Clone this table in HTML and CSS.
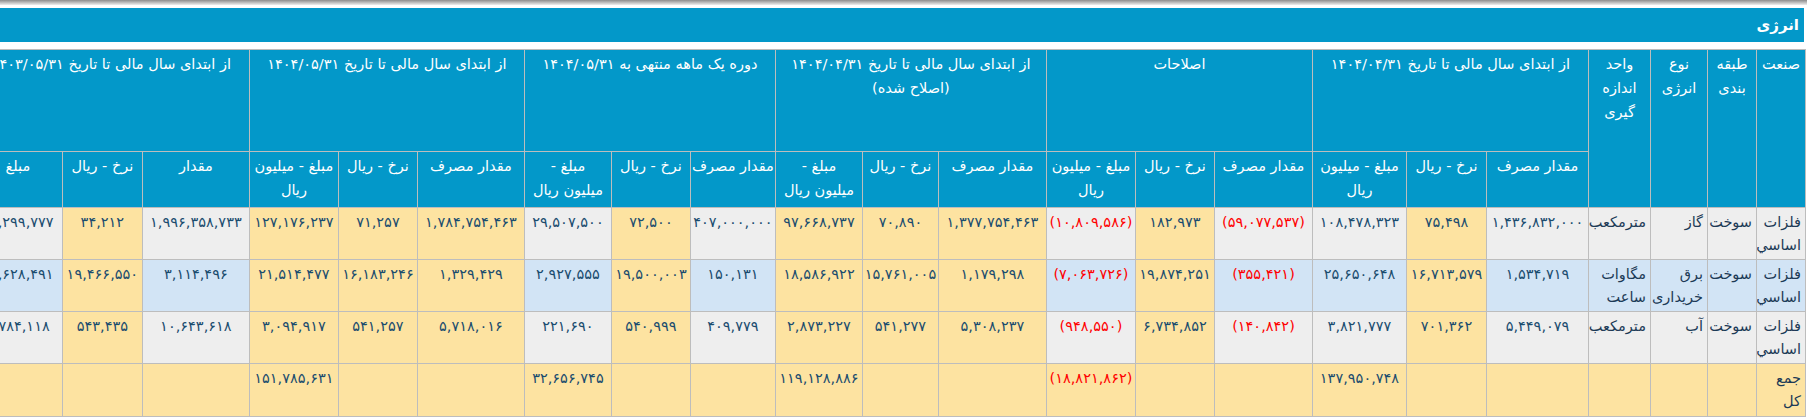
FILE: index.html
```html
<!DOCTYPE html>
<html lang="fa" dir="rtl">
<head>
<meta charset="utf-8">
<title>انرژی</title>
<link rel="stylesheet" href="styles.css">
</head>
<body>
<div class="shade"></div>
<div class="title-bar">انرژی</div>
<div class="table-wrap">
<table class="energy">
<colgroup>
<col class="w49"><col class="w49"><col class="w57"><col class="w62">
<col class="w102"><col class="w80"><col class="w94">
<col class="w98"><col class="w79"><col class="w89">
<col class="w108"><col class="w76"><col class="w87">
<col class="w85"><col class="w79"><col class="w87">
<col class="w107"><col class="w79"><col class="w89">
<col class="w107"><col class="w80"><col class="w89">
</colgroup>
<thead>
<tr class="h1">
<th rowspan="2">صنعت</th>
<th rowspan="2">طبقه بندی</th>
<th rowspan="2">نوع انرژی</th>
<th rowspan="2">واحد اندازه گیری</th>
<th colspan="3">از ابتدای سال مالی تا تاریخ ۱۴۰۴/۰۴/۳۱</th>
<th colspan="3">اصلاحات</th>
<th colspan="3">از ابتدای سال مالی تا تاریخ ۱۴۰۴/۰۴/۳۱ (اصلاح شده)</th>
<th colspan="3">دوره یک ماهه منتهی به ۱۴۰۴/۰۵/۳۱</th>
<th colspan="3">از ابتدای سال مالی تا تاریخ ۱۴۰۴/۰۵/۳۱</th>
<th colspan="3">از ابتدای سال مالی تا تاریخ ۱۴۰۳/۰۵/۳۱</th>
</tr>
<tr class="h2">
<th class="nw">مقدار مصرف</th><th class="nw">نرخ - ریال</th><th>مبلغ - میلیون ریال</th>
<th class="nw">مقدار مصرف</th><th class="nw">نرخ - ریال</th><th>مبلغ - میلیون ریال</th>
<th class="nw">مقدار مصرف</th><th class="nw">نرخ - ریال</th><th>مبلغ -<br>میلیون ریال</th>
<th class="nw">مقدار مصرف</th><th class="nw">نرخ - ریال</th><th>مبلغ -<br>میلیون ریال</th>
<th class="nw">مقدار مصرف</th><th class="nw">نرخ - ریال</th><th>مبلغ - میلیون ریال</th>
<th class="nw">مقدار</th><th class="nw">نرخ - ریال</th><th class="nw">مبلغ</th>
</tr>
</thead>
<tbody>
<tr class="row">
<td class="txt g">فلزات اساسي</td><td class="txt g">سوخت</td><td class="txt g">گاز</td><td class="txt g">مترمکعب</td>
<td class="n g">۱,۴۳۶,۸۳۲,۰۰۰</td><td class="n y">۷۵,۴۹۸</td><td class="n g">۱۰۸,۴۷۸,۳۲۳</td>
<td class="n g neg">(۵۹,۰۷۷,۵۳۷)</td><td class="n y">۱۸۲,۹۷۳</td><td class="n g neg">(۱۰,۸۰۹,۵۸۶)</td>
<td class="n y">۱,۳۷۷,۷۵۴,۴۶۳</td><td class="n y">۷۰,۸۹۰</td><td class="n y">۹۷,۶۶۸,۷۳۷</td>
<td class="n g">۴۰۷,۰۰۰,۰۰۰</td><td class="n y">۷۲,۵۰۰</td><td class="n g">۲۹,۵۰۷,۵۰۰</td>
<td class="n y">۱,۷۸۴,۷۵۴,۴۶۳</td><td class="n y">۷۱,۲۵۷</td><td class="n y">۱۲۷,۱۷۶,۲۳۷</td>
<td class="n g">۱,۹۹۶,۳۵۸,۷۳۳</td><td class="n y">۳۴,۲۱۲</td><td class="n g">۶۸,۲۹۹,۷۷۷</td>
</tr>
<tr class="row">
<td class="txt b">فلزات اساسي</td><td class="txt b">سوخت</td><td class="txt b">برق خریداری</td><td class="txt b">مگاوات ساعت</td>
<td class="n b">۱,۵۳۴,۷۱۹</td><td class="n y">۱۶,۷۱۳,۵۷۹</td><td class="n b">۲۵,۶۵۰,۶۴۸</td>
<td class="n b neg">(۳۵۵,۴۲۱)</td><td class="n y">۱۹,۸۷۴,۲۵۱</td><td class="n b neg">(۷,۰۶۳,۷۲۶)</td>
<td class="n y">۱,۱۷۹,۲۹۸</td><td class="n y">۱۵,۷۶۱,۰۰۵</td><td class="n y">۱۸,۵۸۶,۹۲۲</td>
<td class="n b">۱۵۰,۱۳۱</td><td class="n y">۱۹,۵۰۰,۰۰۳</td><td class="n b">۲,۹۲۷,۵۵۵</td>
<td class="n y">۱,۳۲۹,۴۲۹</td><td class="n y">۱۶,۱۸۳,۲۴۶</td><td class="n y">۲۱,۵۱۴,۴۷۷</td>
<td class="n b">۳,۱۱۴,۴۹۶</td><td class="n y">۱۹,۴۶۶,۵۵۰</td><td class="n b">۶۰,۶۲۸,۴۹۱</td>
</tr>
<tr class="row">
<td class="txt g">فلزات اساسي</td><td class="txt g">سوخت</td><td class="txt g">آب</td><td class="txt g">مترمکعب</td>
<td class="n g">۵,۴۴۹,۰۷۹</td><td class="n y">۷۰۱,۳۶۲</td><td class="n g">۳,۸۲۱,۷۷۷</td>
<td class="n g neg">(۱۴۰,۸۴۲)</td><td class="n y">۶,۷۳۴,۸۵۲</td><td class="n g neg">(۹۴۸,۵۵۰)</td>
<td class="n y">۵,۳۰۸,۲۳۷</td><td class="n y">۵۴۱,۲۷۷</td><td class="n y">۲,۸۷۳,۲۲۷</td>
<td class="n g">۴۰۹,۷۷۹</td><td class="n y">۵۴۰,۹۹۹</td><td class="n g">۲۲۱,۶۹۰</td>
<td class="n y">۵,۷۱۸,۰۱۶</td><td class="n y">۵۴۱,۲۵۷</td><td class="n y">۳,۰۹۴,۹۱۷</td>
<td class="n g">۱۰,۶۴۳,۶۱۸</td><td class="n y">۵۴۳,۴۳۵</td><td class="n g">۵,۷۸۴,۱۱۸</td>
</tr>
<tr class="row total">
<td class="txt y">جمع کل</td><td class="y"></td><td class="y"></td><td class="y"></td>
<td class="y"></td><td class="y"></td><td class="n y">۱۳۷,۹۵۰,۷۴۸</td>
<td class="y"></td><td class="y"></td><td class="n y neg">(۱۸,۸۲۱,۸۶۲)</td>
<td class="y"></td><td class="y"></td><td class="n y">۱۱۹,۱۲۸,۸۸۶</td>
<td class="y"></td><td class="y"></td><td class="n y">۳۲,۶۵۶,۷۴۵</td>
<td class="y"></td><td class="y"></td><td class="n y">۱۵۱,۷۸۵,۶۳۱</td>
<td class="y"></td><td class="y"></td><td class="y"></td>
</tr>
</tbody>
</table>
</div>
</body>
</html>
```
FILE: styles.css
```css
html, body {
  margin: 0;
  padding: 0;
  background: #ffffff;
}
body {
  direction: rtl;
  font-family: "DejaVu Sans", sans-serif;
  font-size: 14.5px;
  color: #1a4c6e;
}
.shade {
  height: 5px;
  margin-bottom: 3px;
  background: linear-gradient(#8c8c8c, #eeeeee);
}
.title-bar {
  height: 34px;
  margin-right: 3px;
  margin-bottom: 7px;
  padding-right: 5px;
  display: flex;
  align-items: center;
  background: #0398c9;
  color: #ffffff;
  font-weight: bold;
  font-size: 15px;
}
.table-wrap {
  overflow: hidden;
  margin-right: 1px;
}
.energy {
  border-collapse: collapse;
  table-layout: fixed;
  width: 1832px;
}
.energy th,
.energy td {
  border: 1px solid #bdbdbd;
  vertical-align: top;
  line-height: 23px;
  overflow: hidden;
}
.energy th {
  background: #0398c9;
  color: #ffffff;
  font-weight: normal;
  text-align: center;
  padding: 2px 2px 0;
  line-height: 24px;
}
.energy th.nw { white-space: nowrap; padding-left: 0; padding-right: 0; }
.h1 th { height: 99px; }
.h2 th { height: 53px; }
.row td { height: 48px; padding: 3px 4px 0; }
.total td { height: 49px; }
.txt { text-align: right; color: #1c3a56; }
.energy td.n { text-align: center; padding-left: 0; padding-right: 0; white-space: nowrap; }
.g { background: #eeeeee; }
.y { background: #fde3a1; }
.b { background: #d2e4f5; }
.neg { color: #ff0000; }

.w49 { width: 49px; }
.w57 { width: 57px; }
.w62 { width: 62px; }
.w76 { width: 76px; }
.w79 { width: 79px; }
.w80 { width: 80px; }
.w85 { width: 85px; }
.w87 { width: 87px; }
.w89 { width: 89px; }
.w94 { width: 94px; }
.w98 { width: 98px; }
.w102 { width: 102px; }
.w107 { width: 107px; }
.w108 { width: 108px; }
```
